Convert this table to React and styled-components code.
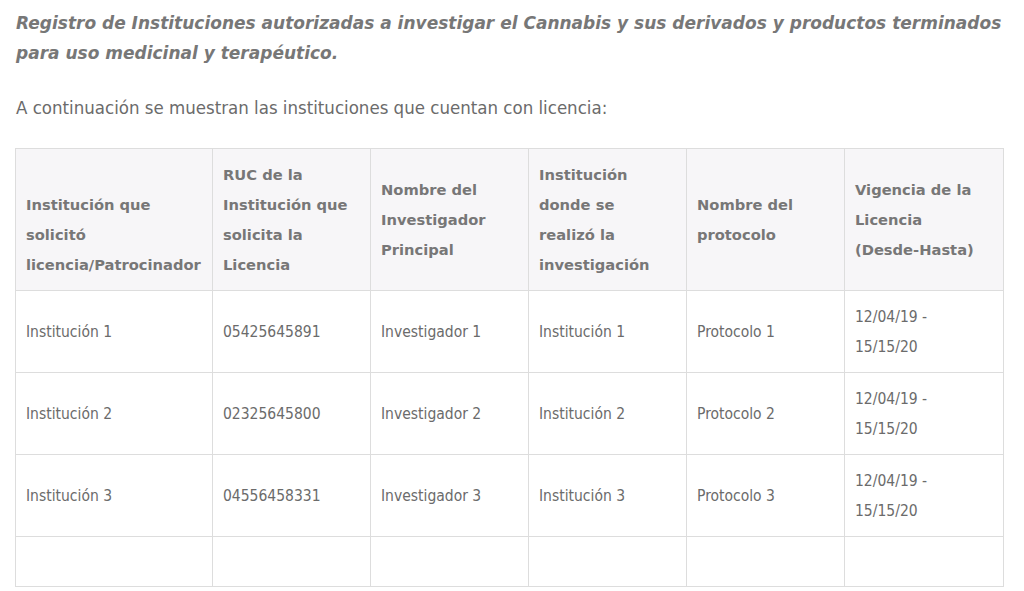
import React from "react";
import styled, { createGlobalStyle } from "styled-components";

const GlobalStyle = createGlobalStyle`
  html, body {
    margin: 0;
    padding: 0;
    background: #ffffff;
  }
`;

// each header label is split into the lines it shows in the design
const columns = [
  { label: ["Institución que", "solicitó", "licencia/Patrocinador"], width: 197, valign: "bottom" },
  { label: ["RUC de la", "Institución que", "solicita la", "Licencia"], width: 158 },
  { label: ["Nombre del", "Investigador", "Principal"], width: 158 },
  { label: ["Institución", "donde se", "realizó la", "investigación"], width: 158 },
  { label: ["Nombre del", "protocolo"], width: 158 },
  { label: ["Vigencia de la", "Licencia", "(Desde-Hasta)"], width: 159 },
];

const rows = [
  ["Institución 1", "05425645891", "Investigador 1", "Institución 1", "Protocolo 1", ["12/04/19 -", "15/15/20"]],
  ["Institución 2", "02325645800", "Investigador 2", "Institución 2", "Protocolo 2", ["12/04/19 -", "15/15/20"]],
  ["Institución 3", "04556458331", "Investigador 3", "Institución 3", "Protocolo 3", ["12/04/19 -", "15/15/20"]],
  ["", "", "", "", "", ""],
];

function Lines({ value }) {
  if (!Array.isArray(value)) return value || "\u00a0";
  return value.map((line, i) => (
    <React.Fragment key={i}>
      {i > 0 && <br />}
      {line}
    </React.Fragment>
  ));
}

function App() {
  return (
    <Page>
      <GlobalStyle />
      <Title>
        Registro de Instituciones autorizadas a investigar el Cannabis y sus derivados y
        productos terminados para uso medicinal y terapéutico.
      </Title>
      <Intro>A continuación se muestran las instituciones que cuentan con licencia:</Intro>
      <Table>
        <colgroup>
          {columns.map((c, i) => (
            <col key={i} style={{ width: c.width }} />
          ))}
        </colgroup>
        <thead>
          <tr>
            {columns.map((c, i) => (
              <HeadCell key={i} $valign={c.valign}>
                <Lines value={c.label} />
              </HeadCell>
            ))}
          </tr>
        </thead>
        <tbody>
          {rows.map((r, i) => {
            const empty = r.every((v) => !v);
            return (
              <tr key={i}>
                {r.map((v, j) => (
                  <Cell key={j} $empty={empty}>
                    <Lines value={v} />
                  </Cell>
                ))}
              </tr>
            );
          })}
        </tbody>
      </Table>
    </Page>
  );
}

const Page = styled.div`
  padding: 8px 15px 0 16px;
  width: 1024px;
  box-sizing: border-box;
`;

const Title = styled.h2`
  margin: 0;
  font-family: "DejaVu Sans", Verdana, sans-serif;
  font-style: italic;
  font-weight: bold;
  font-size: 17px;
  line-height: 30px;
  color: #777777;
`;

const Intro = styled.p`
  margin: 25px 0 25px;
  font-family: "DejaVu Sans Condensed", Tahoma, sans-serif;
  font-size: 18.5px;
  line-height: 30px;
  color: #6b6b6b;
`;

const Table = styled.table`
  width: 988px;
  margin-left: -1px;
  table-layout: fixed;
  border-collapse: collapse;
  border: 1px solid #dddddd;
`;

const HeadCell = styled.th`
  background: #f7f6f8;
  border: 1px solid #dddddd;
  padding: 10.5px 10px;
  text-align: left;
  vertical-align: ${(p) => p.$valign || "middle"};
  white-space: nowrap;
  font-family: "DejaVu Sans", Verdana, sans-serif;
  font-weight: bold;
  font-size: 14.7px;
  line-height: 30px;
  color: #777777;
`;

const Cell = styled.td`
  border: 1px solid #dddddd;
  padding: ${(p) => (p.$empty ? "9.5px 10px" : "10.5px 10px")};
  vertical-align: middle;
  white-space: nowrap;
  font-family: "DejaVu Sans Condensed", Tahoma, sans-serif;
  font-size: 15.5px;
  line-height: 30px;
  color: #6b6b6b;
`;

export default App;
